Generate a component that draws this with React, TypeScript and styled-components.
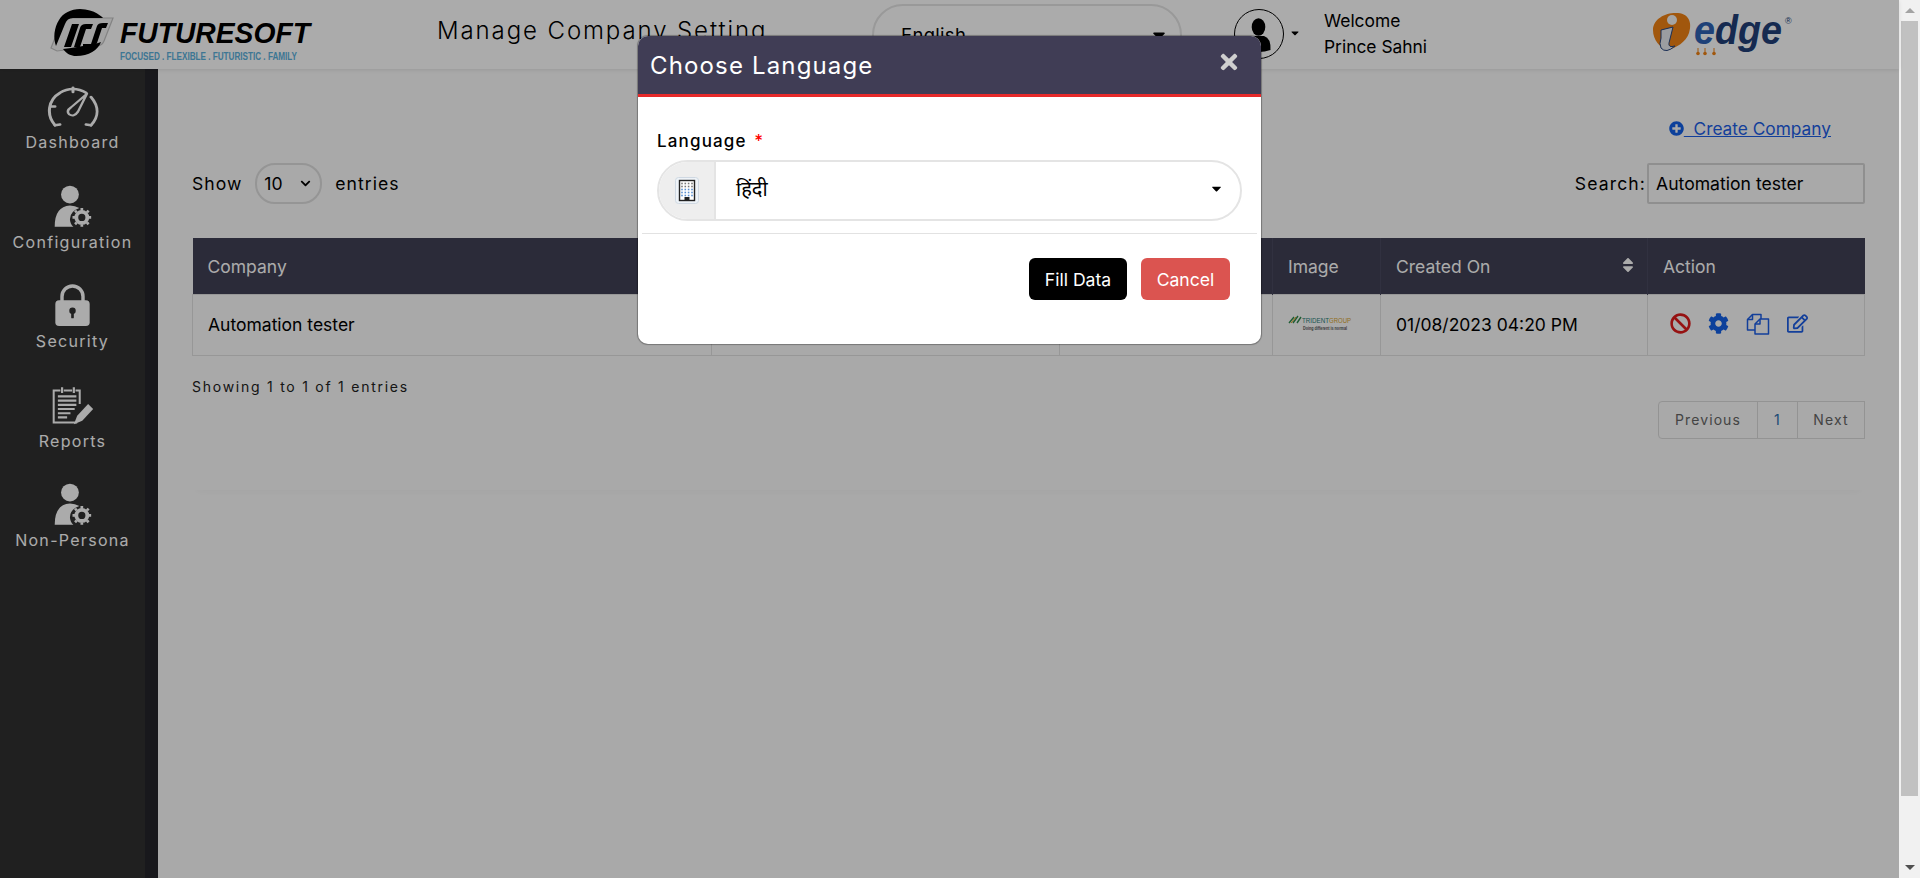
import React from "react";
import styled, { createGlobalStyle } from "styled-components";
import {
  FaBan,
  FaCog,
  FaRegEdit,
  FaPlusCircle,
  FaTimes,
  FaCaretDown,
  FaChevronDown,
  FaSort,
} from "react-icons/fa";

const Global = createGlobalStyle`
  html, body { margin: 0; padding: 0; height: 100%; overflow: hidden; background: #fff; }
  body { font-family: Inter, "Noto Sans", sans-serif; color: #000; }
  * { box-sizing: border-box; }
`;

const Page = styled.div`
  display: flex;
  height: 878px;
  width: 1920px;
  overflow: hidden;
`;
const Main = styled.div`
  flex: 1;
  display: flex;
  flex-direction: column;
  min-width: 0;
  position: relative;
`;
const Header = styled.header`
  height: 69px;
  flex: none;
  display: flex;
  align-items: center;
  background: #fff;
  box-shadow: 0 1px 4px rgba(0, 0, 0, 0.1);
  position: relative;
  z-index: 1;
`;
const LogoSlot = styled.div`
  width: 437px;
  flex: none;
  padding-left: 43px;
  display: flex;
`;
const PageTitle = styled.h1`
  width: 435px;
  flex: none;
  margin: 0 0 9px;
  font-size: 24px;
  font-weight: 300;
  letter-spacing: 1.9px;
  white-space: nowrap;
`;
const LangSelect = styled.div`
  width: 310px;
  height: 62px;
  flex: none;
  margin-top: 1px;
  border: 2px solid #e4e4e4;
  border-radius: 31px;
  padding: 0 11px 0 27px;
  display: flex;
  align-items: center;
  justify-content: space-between;
  font-size: 18.5px;
  letter-spacing: 0.3px;
  svg {
    font-size: 20px;
  }
`;
const UserSlot = styled.div`
  margin-left: 52px;
  display: flex;
  align-items: center;
  width: 418px;
  flex: none;
`;
const Avatar = styled.svg`
  width: 50px;
  height: 50px;
  flex: none;
  margin-bottom: 2px;
`;
const UserCaret = styled.span`
  font-size: 12px;
  margin: 0 23px 4px 5px;
  display: flex;
`;
const Welcome = styled.div`
  font-size: 17.4px;
  line-height: 26px;
  margin-bottom: 2px;
  white-space: nowrap;
`;
const Body = styled.div`
  flex: 1;
  display: flex;
  min-height: 0;
`;
const Sidebar = styled.nav`
  width: 158px;
  flex: none;
  background: #313131;
  border-right: 13px solid #25252a;
  display: flex;
  flex-direction: column;
  align-items: center;
  padding-top: 14px;
`;
const NavItem = styled.a`
  height: 99.5px;
  width: 100%;
  display: flex;
  flex-direction: column;
  align-items: center;
  color: #fff;
  font-size: 16px;
  letter-spacing: 1.3px;
`;
const IconBox = styled.span`
  height: 44px;
  margin-bottom: 5px;
  display: flex;
  align-items: flex-end;
  justify-content: center;
  color: #fff;
`;
const Content = styled.main`
  flex: 1;
  padding: 26px 34px 0;
  min-width: 0;
  background: #fcfcfc;
`;
const Card = styled.section`
  height: 395px;
  box-shadow: 0 6px 8px -6px rgba(0, 0, 0, 0.04);
  display: flex;
  flex-direction: column;
`;
const CreateRow = styled.div`
  height: 68px;
  display: flex;
  justify-content: flex-end;
  align-items: flex-start;
  padding: 23px 34px 0 0;
`;
const CreateLink = styled.a`
  color: #1d5ee6;
  font-size: 17.3px;
  text-decoration: underline;
  white-space: pre;
  svg {
    color: #1360e8;
    font-size: 15px;
    vertical-align: -1px;
  }
`;
const Filters = styled.div`
  height: 75px;
  display: flex;
  align-items: flex-start;
  justify-content: space-between;
`;
const ShowGroup = styled.div`
  display: flex;
  align-items: center;
  font-size: 17.6px;
  letter-spacing: 1px;
  height: 40px;
`;
const PageSize = styled.span`
  width: 67px;
  height: 41px;
  margin: 0 13px;
  border: 2px solid #dedede;
  border-radius: 20px;
  padding: 0 9px 0 7px;
  display: flex;
  align-items: center;
  justify-content: space-between;
  letter-spacing: 0;
  svg {
    font-size: 11px;
  }
`;
const SearchGroup = styled.label`
  display: flex;
  align-items: center;
  height: 41px;
  font-size: 17.6px;
  letter-spacing: 1.1px;
`;
const SearchBox = styled.span`
  width: 218px;
  height: 41px;
  margin-left: 1px;
  border: 2px solid #d6d6d6;
  border-radius: 2px;
  padding: 0 7px;
  display: flex;
  align-items: center;
  letter-spacing: 0;
`;
const Table = styled.table`
  width: 1672px;
  border-collapse: collapse;
  table-layout: fixed;
  font-size: 17.5px;
`;
const Th = styled.th<{ $w: number }>`
  width: ${(p) => p.$w}px;
  height: 56px;
  background: #404055;
  color: #fff;
  font-weight: 400;
  text-align: left;
  padding: 2px 15px 0;
  border-right: 1px solid #4a4a60;
  position: relative;
  &:last-child {
    border-right: 0;
  }
`;
const SortMark = styled.span`
  position: absolute;
  right: 10px;
  top: 18px;
  font-size: 18px;
  color: #fff;
`;
const Td = styled.td`
  height: 61px;
  padding: 0 15px;
  border: 1px solid #e2e2e2;
`;
const Actions = styled.div`
  display: flex;
  align-items: center;
  gap: 17px;
  padding-left: 7px;
  margin-top: -2px;
`;
const ActionIcon = styled.span<{ $c: string }>`
  color: ${(p) => p.$c};
  font-size: 21px;
  display: flex;
`;
const Foot = styled.div`
  font-size: 14px;
  letter-spacing: 1.75px;
  margin-top: 22px;
  height: 23px;
  color: #222;
`;
const Pager = styled.div`
  display: flex;
  justify-content: flex-end;
`;
const PageBtn = styled.span<{ $blue?: boolean; $w: number }>`
  width: ${(p) => p.$w}px;
  height: 38px;
  display: flex;
  align-items: center;
  justify-content: center;
  font-size: 14px;
  letter-spacing: 1.1px;
  color: ${(p) => (p.$blue ? "#2b6fb0" : "#666")};
  border: 1px solid #dcdcdc;
  margin-left: -1px;
  &:first-child {
    border-radius: 4px 0 0 4px;
  }
`;
const Scrollbar = styled.div`
  width: 21px;
  flex: none;
  background: #f1f1f1;
  display: flex;
  flex-direction: column;
  align-items: center;
`;
const ScrollArrow = styled.div<{ $down?: boolean }>`
  height: ${(p) => (p.$down ? 82 : 21)}px;
  display: flex;
  justify-content: center;
  align-items: ${(p) => (p.$down ? "flex-end" : "center")};
  padding-bottom: ${(p) => (p.$down ? 8 : 0)}px;
  &::before {
    content: "";
    border-left: 5px solid transparent;
    border-right: 5px solid transparent;
    ${(p) =>
      p.$down ? "border-top: 5px solid #505050;" : "border-bottom: 5px solid #a3a3a3;"}
    height: 0;
  }
`;
const ScrollThumb = styled.div`
  width: 17px;
  height: 775px;
  background: #c1c1c1;
`;
const Backdrop = styled.div`
  position: absolute;
  inset: 0;
  z-index: 10;
  background: rgba(0, 0, 0, 0.33);
`;
const Modal = styled.div`
  position: absolute;
  z-index: 11;
  left: 638px;
  top: 36px;
  width: 623px;
  height: 308px;
  background: #fff;
  border-radius: 10px;
  box-shadow: 0 0 1px 1px rgba(0, 0, 0, 0.3);
  overflow: hidden;
`;
const ModalHead = styled.div`
  height: 61px;
  background: #403d55;
  border-bottom: 3px solid #e62a2a;
  color: #fff;
  display: flex;
  align-items: center;
  justify-content: space-between;
  padding: 0 20px 0 12px;
  font-size: 24px;
  letter-spacing: 1.15px;
`;
const Close = styled.span`
  display: flex;
  font-size: 24px;
  color: #cfcfcf;
  margin-top: -6px;
`;
const ModalBody = styled.div`
  padding: 33px 19px 0;
`;
const Label = styled.div`
  font-size: 17px;
  font-weight: 500;
  letter-spacing: 1.15px;
  height: 30px;
  line-height: 22px;
  span {
    color: #f00;
    margin-left: 2px;
  }
`;
const InputGroup = styled.div`
  height: 61px;
  border: 2px solid #e4e4e4;
  border-radius: 31px;
  display: flex;
  overflow: hidden;
`;
const Addon = styled.div`
  width: 57px;
  flex: none;
  background: #eeeeee;
  display: flex;
  align-items: center;
  justify-content: center;
  border-right: 2px solid #e4e4e4;
`;
const Chosen = styled.div`
  flex: 1;
  display: flex;
  align-items: center;
  justify-content: space-between;
  padding: 0 16px 4px 20px;
  font-family: "Noto Sans", sans-serif;
  font-size: 20px;
  svg {
    font-size: 15px;
  }
`;
const Divider = styled.hr`
  margin: 12px -15px 0;
  border: 0;
  border-top: 1px solid #e2e2e2;
`;
const ModalFoot = styled.div`
  display: flex;
  justify-content: flex-end;
  gap: 14px;
  padding: 24px 12px 0 0;
`;
const Btn = styled.button<{ $bg: string; $w: number }>`
  width: ${(p) => p.$w}px;
  height: 42px;
  background: ${(p) => p.$bg};
  color: #fff;
  border: 0;
  border-radius: 6px;
  font-family: Inter, sans-serif;
  font-size: 17.6px;
`;

const FutureLogo = () => (
  <svg width="285" height="62" viewBox="0 0 285 62">
    <path d="M8 44 L18 19 Q20 14 26 14 L70 14 L61 37 Q59 42 53 42 L14 47 Z" fill="#f4f4f4" stroke="#c4c4c4" strokeWidth="1.2" />
    <path d="M37 5 C52 5 60 14 60 14 L30 14 Q24 14 22 20 L13 42 C10 34 11 24 16 16 C20 9 28 5 37 5 Z" fill="#000" />
    <path d="M33 52 C46 52 55 46 58 38 L52 40 L28 44 L20 45 C24 50 28 52 33 52 Z" fill="#000" />
    <path d="M21 43 L29 20 H36 L28 43 Z M31 43 L37 24 Q38 20 43 20 H50 L48 25 H43 L37 43 Z M40 40 H48 L54 22 Q55 19 60 19 H65 L63 24 H59 L54 39 Q53 42 48 42 H40 Z" fill="#000" />
    <text x="77" y="38.5" fontFamily="'Liberation Sans', sans-serif" fontWeight="700" fontStyle="italic" fontSize="30" textLength="190" lengthAdjust="spacingAndGlyphs">FUTURESOFT</text>
    <text x="77" y="55.5" fontFamily="'Liberation Sans', sans-serif" fontWeight="700" fontSize="10" fill="#5bb0dc" textLength="177" lengthAdjust="spacingAndGlyphs">FOCUSED . FLEXIBLE . FUTURISTIC . FAMILY</text>
  </svg>
);

const EdgeLogo = () => (
  <svg width="144" height="50" viewBox="0 0 144 50">
    <path d="M1 20 C1 8 15 2 26 3 C38 4 40 14 37 23 C34 32 24 38 16 40 C8 38 1 30 1 20 Z" fill="#f08214" />
    <path d="M9 20 L21 17 L17 33 Q16 38 23 36 Q14 44 9 38 Q7 34 9 28 Z" fill="#e8eaf0" stroke="#27457e" strokeWidth="1" />
    <circle cx="20" cy="10" r="5" fill="#f6f6f6" />
    <text x="42" y="33.5" fontFamily="'Liberation Sans', sans-serif" fontWeight="700" fontStyle="italic" fontSize="41" fill="#213f78" textLength="88" lengthAdjust="spacingAndGlyphs">
      <tspan fill="#2f62b4">e</tspan>dge
    </text>
    <path d="M46 38 V42 M53 38 V42 M62 38 V42" stroke="#f08214" strokeWidth="1" />
    <circle cx="46" cy="43.5" r="1.8" fill="#f08214" />
    <circle cx="53" cy="43.5" r="1.8" fill="#f08214" />
    <circle cx="62" cy="43.5" r="1.8" fill="#f08214" />
    <text x="133" y="14" fontFamily="'Liberation Sans', sans-serif" fontSize="9" fill="#213f78">®</text>
  </svg>
);

const Gauge = () => (
  <svg width="52" height="41" viewBox="0 0 52 48" preserveAspectRatio="none" fill="none" stroke="#fff" strokeWidth="3" strokeLinecap="round">
    <path d="M8 46 C-1 34 1 16 13 8 C21 2 31 2 39 8 M44 13 C52 24 52 36 44 46" />
    <path d="M26 2 V7 M8 24 H4 M8 46 l5 -1 M44 46 l-5 -1" />
    <path d="M40 9 L31 30 Q27 37 22 33 Q19 29 24 25 Z" fill="none" strokeWidth="2.4" strokeLinejoin="round" />
  </svg>
);

const PersonGear = () => (
  <svg width="39" height="42" viewBox="0 0 46 49">
    <circle cx="20" cy="11" r="10.5" fill="#fff" />
    <path d="M2 49 Q2 25 20 24 Q26 24 31 27 Q20 31 20 40 Q20 45 24 49 Z" fill="#fff" />
    <g transform="translate(34 38)">
      <circle r="6.5" fill="none" stroke="#fff" strokeWidth="4.5" />
      <path d="M0 -11 V-8 M0 11 V8 M-11 0 H-8 M11 0 H8 M-8 -8 L-6 -6 M8 8 L6 6 M-8 8 L-6 6 M8 -8 L6 -6" stroke="#fff" strokeWidth="3.2" />
    </g>
  </svg>
);

const LockIcon = () => (
  <svg width="35" height="42" viewBox="0 0 36 44">
    <path d="M7 19 V13 a11 11 0 0 1 22 0 V19" fill="none" stroke="#fff" strokeWidth="3.6" />
    <rect x="0" y="17" width="36" height="27" rx="4" fill="#fff" />
    <circle cx="18" cy="28" r="3.4" fill="#313131" />
    <rect x="16.6" y="28" width="2.8" height="8" rx="1" fill="#313131" />
  </svg>
);

const ReportIcon = () => (
  <svg width="42" height="39" viewBox="0 0 50 46" fill="none" stroke="#fff">
    <path d="M10 4 H2 V42 H30" strokeWidth="2.4" />
    <path d="M14 4 H24 M28 4 H33 V20" strokeWidth="2.4" />
    <path d="M12 0 V7 M26 0 V7" strokeWidth="2.6" />
    <path d="M7 11 H29 M7 16 H29 M7 21 H29 M7 26 H27 M7 31 H22 M7 36 H18" strokeWidth="2.6" />
    <path d="M26 44 L30 34 L43 20 L49 26 L36 40 Z" fill="#fff" stroke="none" />
  </svg>
);

const BuildingIcon = () => (
  <svg width="24" height="27" viewBox="0 0 24 27">
    <rect x="0.5" y="0.5" width="23" height="26" rx="3" fill="#eef3f8" stroke="#cfd8e2" />
    <rect x="4.5" y="3.5" width="15" height="20" fill="#fff" stroke="#222" strokeWidth="1.4" />
    {[6.5, 9.5, 12.5, 15.5, 18.5].map((y) =>
      [7, 10.3, 13.6, 17].map((x) => (
        <rect key={`${x}-${y}`} x={x - 0.8} y={y - 0.8} width="1.6" height="1.6" fill={y > 11 ? "#5a8fd0" : "#777"} />
      ))
    )}
    <rect x="9.5" y="20" width="5" height="3.5" fill="#222" />
  </svg>
);

const CopyIcon = () => (
  <svg width="24" height="22" viewBox="0 0 24 22" fill="none" stroke="currentColor" strokeWidth="1.5" strokeLinejoin="round">
    <path d="M9 17 H1.5 V6.5 L6.5 1.5 H15 V6" />
    <path d="M6.5 1.5 V6.5 H1.5" />
    <path d="M9 11 L14 6 H22.5 V21 H9 Z" />
    <path d="M14 6 V11 H9" />
  </svg>
);

const TridentLogo = () => (
  <svg width="66" height="18" viewBox="0 0 66 18">
    <path d="M1 9 L6 3 M5 9 L10 2 M9 9 L13 3" stroke="#2d8a4e" strokeWidth="1.4" />
    <path d="M3 9 L8 3" stroke="#e0a020" strokeWidth="1" />
    <text x="14" y="9" fontFamily="'Liberation Sans', sans-serif" fontSize="7.5" fill="#2a7f7a" textLength="27" lengthAdjust="spacingAndGlyphs">TRIDENT</text>
    <text x="41" y="9" fontFamily="'Liberation Sans', sans-serif" fontSize="7.5" fill="#d9a52b" textLength="22" lengthAdjust="spacingAndGlyphs">GROUP</text>
    <text x="15" y="16" fontFamily="'Liberation Sans', sans-serif" fontSize="4.5" fontWeight="700" fill="#555" textLength="44" lengthAdjust="spacingAndGlyphs">Doing different is normal</text>
  </svg>
);

const columns = [
  { label: "Company", w: 519 },
  { label: "", w: 348 },
  { label: "", w: 213 },
  { label: "Image", w: 108 },
  { label: "Created On", w: 267, sort: true },
  { label: "Action", w: 217 },
];

const navItems: { label: string; icon: React.ReactNode }[] = [
  { label: "Dashboard", icon: <Gauge /> },
  { label: "Configuration", icon: <PersonGear /> },
  { label: "Security", icon: <LockIcon /> },
  { label: "Reports", icon: <ReportIcon /> },
  { label: "Non-Persona", icon: <PersonGear /> },
];

export default function App() {
  return (
    <>
      <Global />
      <Page>
        <Main>
          <Header>
            <LogoSlot>
              <FutureLogo />
            </LogoSlot>
            <PageTitle>Manage Company Setting</PageTitle>
            <LangSelect>
              English
              <FaCaretDown />
            </LangSelect>
            <UserSlot>
              <Avatar viewBox="0 0 50 50">
                <circle cx="25" cy="25" r="24.5" fill="none" stroke="#000" />
                <ellipse cx="24.5" cy="18" rx="6.8" ry="8.8" fill="#000" />
                <path d="M13 41 Q12.5 29 20 27 L30 27 Q37 29 36.5 41 Q25 45 13 41 Z" fill="#000" />
              </Avatar>
              <UserCaret>
                <FaCaretDown />
              </UserCaret>
              <Welcome>
                Welcome
                <br />
                Prince Sahni
              </Welcome>
            </UserSlot>
            <EdgeLogo />
          </Header>
          <Body>
            <Sidebar>
              {navItems.map((n) => (
                <NavItem key={n.label}>
                  <IconBox>{n.icon}</IconBox>
                  {n.label}
                </NavItem>
              ))}
            </Sidebar>
            <Content>
              <Card>
                <CreateRow>
                  <CreateLink>
                    <FaPlusCircle />
                    {"  Create Company"}
                  </CreateLink>
                </CreateRow>
                <Filters>
                  <ShowGroup>
                    Show
                    <PageSize>
                      10
                      <FaChevronDown />
                    </PageSize>
                    entries
                  </ShowGroup>
                  <SearchGroup>
                    Search:
                    <SearchBox>Automation tester</SearchBox>
                  </SearchGroup>
                </Filters>
                <Table>
                  <thead>
                    <tr>
                      {columns.map((c, i) => (
                        <Th key={i} $w={c.w}>
                          {c.label}
                          {c.sort && (
                            <SortMark>
                              <FaSort />
                            </SortMark>
                          )}
                        </Th>
                      ))}
                    </tr>
                  </thead>
                  <tbody>
                    <tr>
                      <Td>Automation tester</Td>
                      <Td />
                      <Td />
                      <Td>
                        <TridentLogo />
                      </Td>
                      <Td>01/08/2023 04:20 PM</Td>
                      <Td>
                        <Actions>
                          <ActionIcon $c="#e01b1b">
                            <FaBan />
                          </ActionIcon>
                          <ActionIcon $c="#1360e8">
                            <FaCog />
                          </ActionIcon>
                          <ActionIcon $c="#1d5ee6">
                            <CopyIcon />
                          </ActionIcon>
                          <ActionIcon $c="#1d5ee6">
                            <FaRegEdit />
                          </ActionIcon>
                        </Actions>
                      </Td>
                    </tr>
                  </tbody>
                </Table>
                <Foot>Showing 1 to 1 of 1 entries</Foot>
                <Pager>
                  <PageBtn $w={100}>Previous</PageBtn>
                  <PageBtn $w={41} $blue>
                    1
                  </PageBtn>
                  <PageBtn $w={68}>Next</PageBtn>
                </Pager>
              </Card>
            </Content>
          </Body>
          <Backdrop />
          <Modal>
            <ModalHead>
              Choose Language
              <Close>
                <FaTimes />
              </Close>
            </ModalHead>
            <ModalBody>
              <Label>
                Language <span>*</span>
              </Label>
              <InputGroup>
                <Addon>
                  <BuildingIcon />
                </Addon>
                <Chosen>
                  हिंदी
                  <FaCaretDown />
                </Chosen>
              </InputGroup>
              <Divider />
              <ModalFoot>
                <Btn $bg="#000" $w={98}>
                  Fill Data
                </Btn>
                <Btn $bg="#db5450" $w={89}>
                  Cancel
                </Btn>
              </ModalFoot>
            </ModalBody>
          </Modal>
        </Main>
        <Scrollbar>
          <ScrollArrow />
          <ScrollThumb />
          <ScrollArrow $down />
        </Scrollbar>
      </Page>
    </>
  );
}
